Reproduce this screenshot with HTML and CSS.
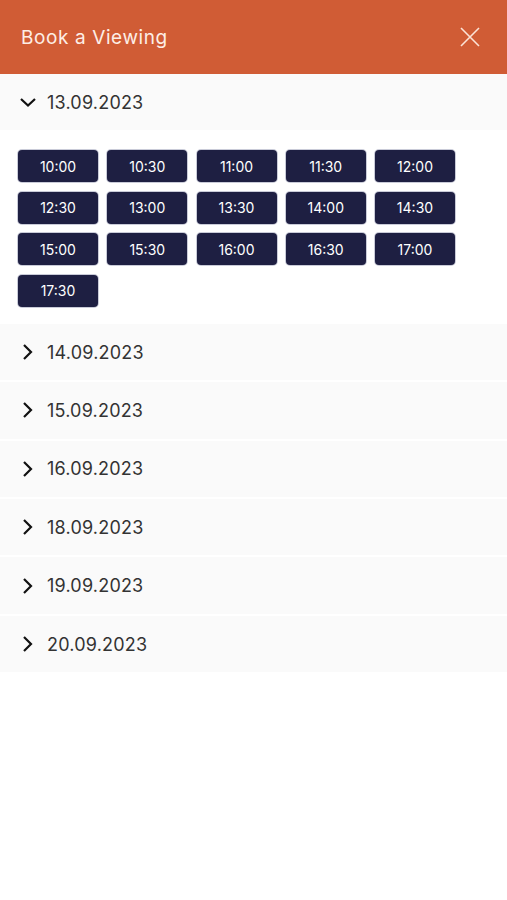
FILE: index.html
```html
<!DOCTYPE html>
<html>

<head>
    <title>Book a Viewing</title>
    <meta charset="utf-8">
    <link rel="stylesheet" href="styles.css">
</head>

<body>
    <header class="topbar">
        <h1 class="title">Book a Viewing</h1>
        <button class="close" aria-label="Close">
            <svg width="20" height="20" viewBox="0 0 20 20">
                <path d="M1 1 L19 19 M19 1 L1 19" stroke="#fbe3d6" stroke-width="1.6" fill="none" />
            </svg>
        </button>
    </header>

    <section class="days">
        <div class="day open">
            <div class="day-head">
                <svg class="chev" width="18" height="18" viewBox="0 0 18 18">
                    <path d="M2 6 L9 12.5 L16 6" stroke="#111" stroke-width="2.2" fill="none" />
                </svg>
                <span>13.09.2023</span>
            </div>
            <div class="slots">
                <button class="slot">10:00</button>
                <button class="slot">10:30</button>
                <button class="slot">11:00</button>
                <button class="slot">11:30</button>
                <button class="slot">12:00</button>
                <button class="slot">12:30</button>
                <button class="slot">13:00</button>
                <button class="slot">13:30</button>
                <button class="slot">14:00</button>
                <button class="slot">14:30</button>
                <button class="slot">15:00</button>
                <button class="slot">15:30</button>
                <button class="slot">16:00</button>
                <button class="slot">16:30</button>
                <button class="slot">17:00</button>
                <button class="slot">17:30</button>
            </div>
        </div>

        <div class="day">
            <div class="day-head">
                <svg class="chev" width="18" height="18" viewBox="0 0 18 18">
                    <path d="M5 2 L12 9 L5 16" stroke="#111" stroke-width="2.2" fill="none" />
                </svg>
                <span>14.09.2023</span>
            </div>
        </div>
        <div class="day">
            <div class="day-head">
                <svg class="chev" width="18" height="18" viewBox="0 0 18 18">
                    <path d="M5 2 L12 9 L5 16" stroke="#111" stroke-width="2.2" fill="none" />
                </svg>
                <span>15.09.2023</span>
            </div>
        </div>
        <div class="day">
            <div class="day-head">
                <svg class="chev" width="18" height="18" viewBox="0 0 18 18">
                    <path d="M5 2 L12 9 L5 16" stroke="#111" stroke-width="2.2" fill="none" />
                </svg>
                <span>16.09.2023</span>
            </div>
        </div>
        <div class="day">
            <div class="day-head">
                <svg class="chev" width="18" height="18" viewBox="0 0 18 18">
                    <path d="M5 2 L12 9 L5 16" stroke="#111" stroke-width="2.2" fill="none" />
                </svg>
                <span>18.09.2023</span>
            </div>
        </div>
        <div class="day">
            <div class="day-head">
                <svg class="chev" width="18" height="18" viewBox="0 0 18 18">
                    <path d="M5 2 L12 9 L5 16" stroke="#111" stroke-width="2.2" fill="none" />
                </svg>
                <span>19.09.2023</span>
            </div>
        </div>
        <div class="day">
            <div class="day-head">
                <svg class="chev" width="18" height="18" viewBox="0 0 18 18">
                    <path d="M5 2 L12 9 L5 16" stroke="#111" stroke-width="2.2" fill="none" />
                </svg>
                <span>20.09.2023</span>
            </div>
        </div>
    </section>
</body>

</html>
```

FILE: styles.css
```css
body {
    margin: 0;
    background-color: #fff;
    font-family: Inter, "Noto Sans", sans-serif;
}

.topbar {
    height: 74px;
    background-color: #d05c35;
    display: flex;
    align-items: center;
    justify-content: space-between;
    padding: 0 27px 0 21px;
}

.title {
    margin: 0;
    font-size: 19px;
    font-weight: 400;
    letter-spacing: 0.6px;
    color: #fdeee6;
}

.close {
    background: none;
    border: none;
    padding: 0;
    display: flex;
    cursor: pointer;
}

.days {
    display: flex;
    flex-direction: column;
    gap: 2px;
}

.day-head {
    height: 56.4px;
    background-color: #fafafa;
    display: flex;
    align-items: center;
    gap: 10px;
    padding-left: 19px;
    font-size: 18px;
    letter-spacing: 0.2px;
    color: #333;
}

.chev {
    flex: none;
}

.slots {
    display: grid;
    grid-template-columns: repeat(5, 80px);
    column-gap: 9.25px;
    row-gap: 9.5px;
    padding: 20px 18px 15px;
    background-color: #fff;
}

.slot {
    height: 32px;
    border: none;
    border-radius: 4px;
    background-color: #1e1f42;
    color: #fff;
    font-family: inherit;
    font-size: 14px;
    cursor: pointer;
    box-shadow: 0 0 0 1px #c9cbd8;
}
```
